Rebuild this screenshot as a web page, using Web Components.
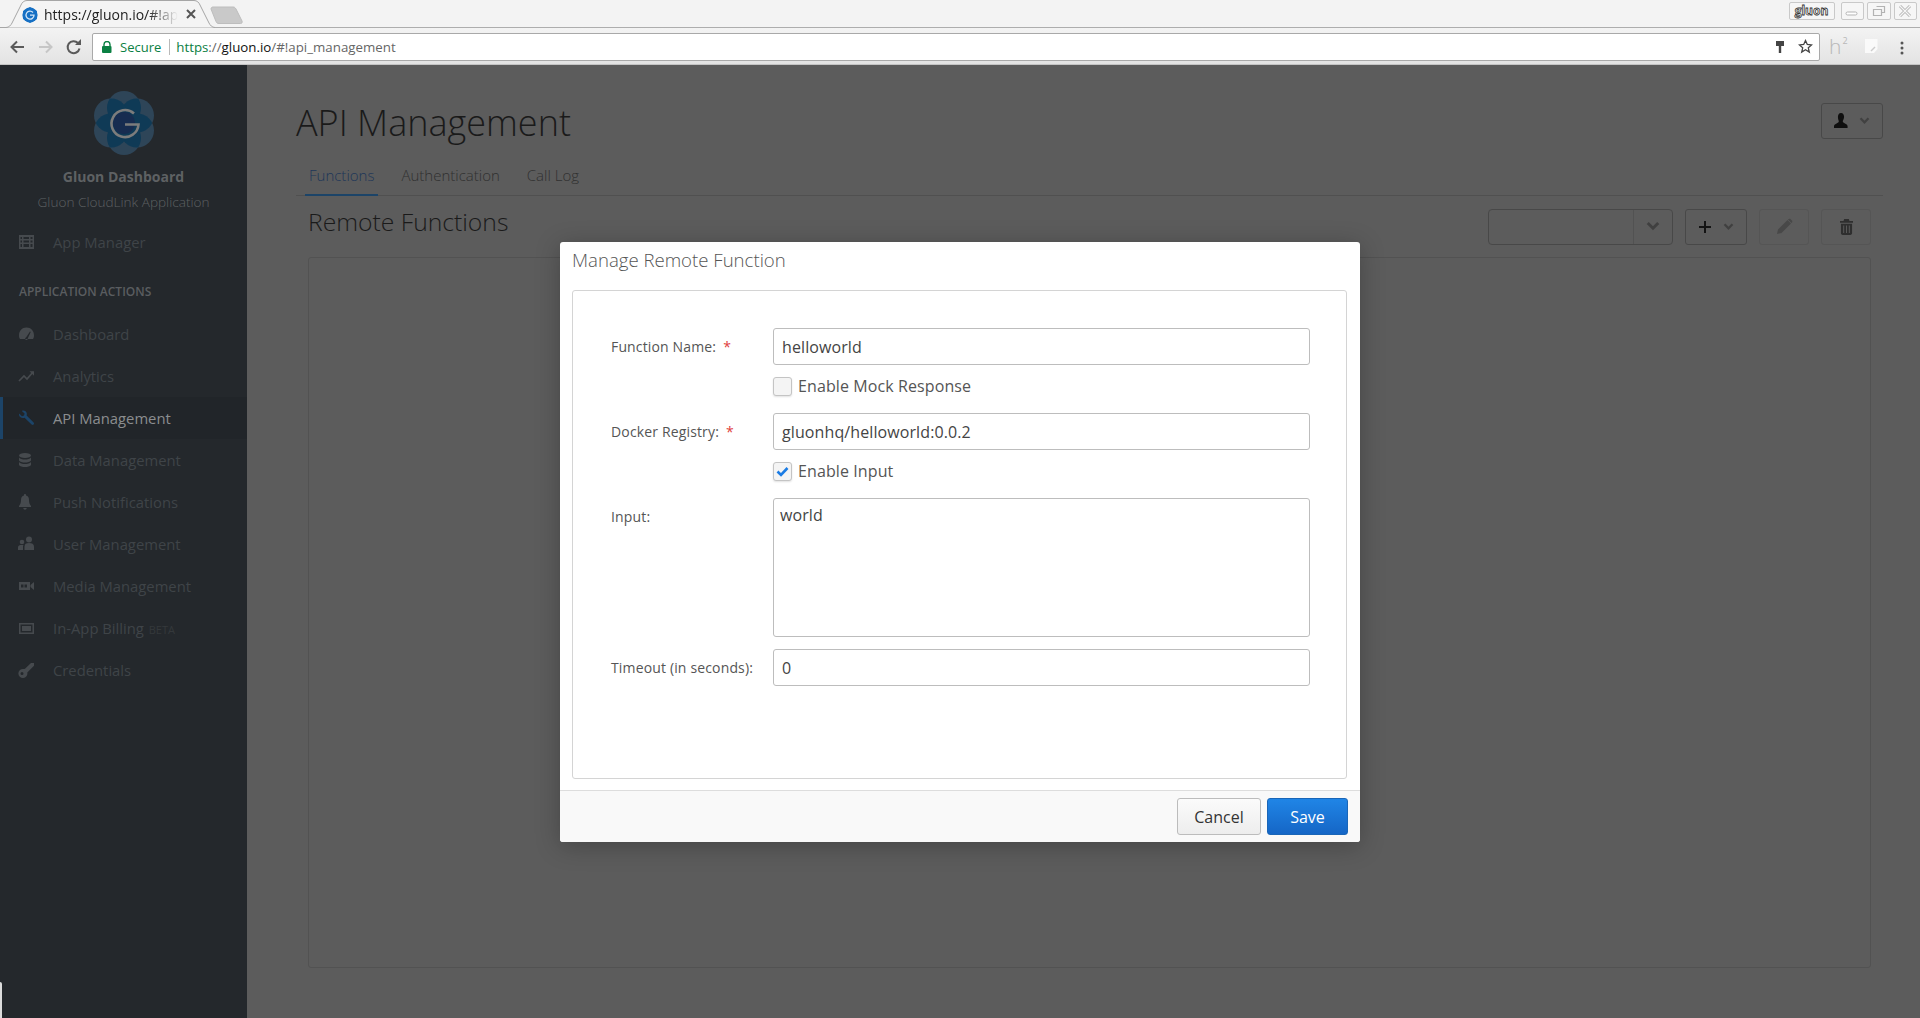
<!DOCTYPE html>
<html><head><meta charset="utf-8">
<style>
html,body{margin:0;height:100%;overflow:hidden;background:#5c5c5c;font-family:"Open Sans","Noto Sans",sans-serif}
body{display:flex;flex-direction:column;height:1018px;position:relative}
</style></head><body>
<browser-frame></browser-frame>
<app-shell>
  <side-nav slot="nav">
    <nav-item icon="table">App Manager</nav-item>
    <nav-heading>APPLICATION ACTIONS</nav-heading>
    <nav-item icon="gauge">Dashboard</nav-item>
    <nav-item icon="chart">Analytics</nav-item>
    <nav-item icon="wrench" active>API Management</nav-item>
    <nav-item icon="db">Data Management</nav-item>
    <nav-item icon="bell">Push Notifications</nav-item>
    <nav-item icon="users">User Management</nav-item>
    <nav-item icon="video">Media Management</nav-item>
    <nav-item icon="money">In-App Billing <small style="font-size:11px;color:#34383b;margin-left:1px">BETA</small></nav-item>
    <nav-item icon="key">Credentials</nav-item>
  </side-nav>
  <page-main slot="main"></page-main>
  <modal-dialog slot="modal"></modal-dialog>
</app-shell>
<script>
const ICONS={
 table:'<path fill-rule="evenodd" d="M1 1h15v14H1zM2.500 3v2h12V3zM2.500 6.500v2h12v-2zM2.500 10v3h12v-3z"/><rect x="4" y="2.500" width="1.500" height="11"/><rect x="11" y="2.500" width="1.500" height="11"/>',
 gauge:'<path fill-rule="evenodd" d="M8.500 1.500C4 1.500 1 5 1 9.500c0 1.500.4 2.700 1 3.500h13c.6-.8 1-2 1-3.500 0-4.500-3-8-7.500-8zM8 11.500l4-6 .7.400-3 6.500a1.300 1.300 0 1 1-1.700-.9z"/>',
 chart:'<path fill="none" stroke="currentColor" stroke-width="1.700" d="M1 13l5-5 3 3 6-7"/><path d="M11.500 3.200H16v4.500z"/>',
 wrench:'<path d="M1 3.500l3 2.700 2-.6.600-2L3.800.9C6 0 8.500 1.200 8.800 3.600c.1.700 0 1.300-.2 1.900l7 7c.6.600.6 1.500 0 2.100-.6.500-1.400.5-2 0l-7-6.900c-.6.200-1.300.3-2 .2C2 7.600.500 5.800 1 3.500z"/>',
 db:'<ellipse cx="7" cy="3.500" rx="6" ry="2.500"/><path d="M1 5.500c1 1.500 3.500 2 6 2s5-.5 6-2v3c-1 1.500-3.500 2-6 2s-5-.5-6-2zM1 10c1 1.500 3.500 2 6 2s5-.5 6-2v3c-1 1.500-3.500 2-6 2s-5-.5-6-2z"/>',
 bell:'<path d="M7 0c.6 0 1 .4 1 1v.6c2 .5 3 2 3 4.400 0 3 .7 4.500 2 6v1H1v-1c1.300-1.500 2-3 2-6 0-2.400 1-3.900 3-4.400V1c0-.6.400-1 1-1zM5.300 14h3.400c0 1-.7 1.700-1.700 1.700S5.300 15 5.300 14z"/>',
 users:'<circle cx="11" cy="3.500" r="3"/><path d="M6.500 14v-3.500C6.500 8 8 7 11 7s5 1 5 3.500V14z"/><circle cx="4" cy="6" r="2.300"/><path d="M0 14v-2.500C0 9.500 1.500 9 4 9c.6 0 1 0 1.500.1-.3.500-.5 1-.5 1.500V14z"/>',
 video:'<path fill-rule="evenodd" d="M1 4h11v8H1zM3 6.500v3h2.500v-3zM6.500 6.500v3H9v-3z"/><path d="M12.500 7L16 4v8l-3.500-3z"/>',
 money:'<path fill-rule="evenodd" d="M1 3h15v11H1zM2.500 4.500v8h12v-8zM4 6h9v5H4z"/><path d="M4 6h1.800L4 10.500zM13 6h-1.800l1.800 4.500z"/>',
 key:'<path fill-rule="evenodd" d="M5.500 7a4.500 4.500 0 1 0 3.800 3.600L16 3.800V1h-3L7 6.800c-.5.100-1 .2-1.500.2zM4 10a1.500 1.500 0 1 1 0 3 1.500 1.500 0 0 1 0-3z"/>'
};
function def(name,html,setup){
  customElements.define(name,class extends HTMLElement{
    constructor(){super();this.attachShadow({mode:'open'}).innerHTML=typeof html==='function'?html(this):html;}
    connectedCallback(){if(setup)setup.call(this)}
  });
}
def('browser-frame',`<style>
:host{display:block;flex:none;height:65px;color:#333;font-family:"Open Sans","Noto Sans",sans-serif}
.strip{height:28px;background:#f3f3f3;position:relative;display:flex;align-items:flex-start;justify-content:flex-end;gap:3px;padding:2px 3px 0 0;box-sizing:border-box;border-bottom:1px solid #adadad}
.tabshape{position:absolute;left:0;top:0}
.title{position:absolute;left:44px;top:4px;height:22px;line-height:22px;font-size:14px;color:#222;white-space:nowrap;-webkit-mask-image:linear-gradient(90deg,#000 78%,transparent);mask-image:linear-gradient(90deg,#000 78%,transparent)}
.x{position:absolute;left:184px;top:7px}
.newtab{position:absolute;left:208px;top:6px}
.fav{position:absolute;left:22px;top:7px}
.badge{width:46px;height:18px;box-sizing:border-box;border:1px solid #c9c9c9;border-radius:2px;font-size:12px;font-weight:700;line-height:15px;text-align:center;color:#fff;-webkit-text-stroke:.8px #333;margin-right:3px;background:#f6f6f6}
.ctl{width:23.500px;height:18px;box-sizing:border-box;border:1px solid #c9c9c9;border-radius:2px;background:#f6f6f6;display:flex;align-items:center;justify-content:center}
.tool{height:37px;background:linear-gradient(#f3f3f3,#e3e3e3);display:flex;align-items:center;box-sizing:border-box;border-bottom:1px solid #c4c4c4;padding-top:1px}
.nav{width:92px;flex:none;display:flex;align-items:center;padding-left:9px;box-sizing:border-box;gap:13px}
.omni{flex:none;width:1728px;height:28px;background:#fff;border:1px solid #a9a9a9;border-radius:2px;box-sizing:border-box;display:flex;align-items:center;font-size:13.300px;white-space:nowrap}
.lock{margin-left:9px}
.sec{color:#0b8043;margin-left:8px;font-size:13px}
.sep{width:1px;height:16px;background:#b9b9b9;margin:0 6px 0 8px}
.url{color:#666;flex:1}.url b{font-weight:400;color:#111}.url i{font-style:normal;color:#0b8043}
.end{display:flex;gap:13px;align-items:center;padding-right:6px}
.ext{flex:1;display:flex;align-items:center;position:relative;height:28px}
.h2{position:absolute;left:9px;top:-1px;font:300 21px "Open Sans",sans-serif;color:#b8b8b8}
.h2 sup{font-size:9px;vertical-align:10px;margin-left:1px;font-weight:400}
.note{position:absolute;left:45px;top:6px}.dots{position:absolute;left:80px;top:8px}
</style>
<div class="strip">
<svg class="tabshape" width="216" height="28"><path d="M0 27.500h6C9 27.500 11 25 12 23L21 5c1-2.500 3-4.500 6-4.500h167c3 0 5 2 6 4.500l9 18c1 2 3 4.500 6 4.500" fill="#f4f4f4" stroke="#a6a6a6"/></svg>
<svg class="fav" width="16" height="16"><path d="M8 0l7 4v8l-7 4-7-4V4z" fill="#1670c4"/><circle cx="8" cy="8" r="7.600" fill="#1670c4"/><path d="M11 5.500A4 4 0 1 0 12 8.200H8" fill="none" stroke="#cfe4f7" stroke-width="1.300"/></svg>
<span class="title">https://gluon.io/#!ap</span>
<svg class="x" width="14" height="14"><path d="M3 3l8 8M11 3l-8 8" stroke="#555" stroke-width="2"/></svg>
<svg class="newtab" width="36" height="20"><path d="M3 3c0-1.500 1-2 2-2h20c1.500 0 2 .5 3 2l6 12c.5 1.500 0 2.500-1.500 2.500H11c-1.500 0-2.500-.5-3-2z" fill="#c9c9c9" stroke="#bdbdbd"/></svg>
<span class="badge">gluon</span>
<span class="ctl"><svg width="14" height="12"><rect x="1" y="7" width="11" height="3" rx="1.500" fill="#fff" stroke="#b3b3b3"/></svg></span>
<span class="ctl"><svg width="14" height="12"><path d="M4.500 1.500h8v6h-3M1.500 4.500h8v6h-8z" fill="none" stroke="#b3b3b3" stroke-width="1.200"/></svg></span>
<span class="ctl"><svg width="14" height="14"><path d="M2 2l10 10M12 2L2 12" stroke="#b3b3b3" stroke-width="3"/><path d="M2 2l10 10M12 2L2 12" stroke="#f6f6f6" stroke-width="1.200"/></svg></span>
</div>
<div class="tool">
<div class="nav">
<svg width="16" height="16"><path d="M15 8H3M8 2.500L2.500 8 8 13.500" fill="none" stroke="#5a5a5a" stroke-width="2"/></svg>
<svg width="16" height="16"><path d="M1 8h12M8 2.500L13.500 8 8 13.500" fill="none" stroke="#c6c6c6" stroke-width="2"/></svg>
<svg width="16" height="16" style="margin-left:-1px"><path d="M13.500 9.500A6 6 0 1 1 12 4" fill="none" stroke="#5a5a5a" stroke-width="2"/><path d="M9 6h6V0z" fill="#5a5a5a"/></svg>
</div>
<div class="omni">
<svg class="lock" width="10" height="12"><path d="M2 5V3.500a3 3 0 0 1 6 0V5" fill="none" stroke="#0b8043" stroke-width="1.400"/><rect y="5" width="9.500" height="7" rx="1" fill="#0b8043"/></svg>
<span class="sec">Secure</span><span class="sep"></span>
<span class="url"><i>https</i>://<b>gluon.io</b>/#!api_management</span>
<span class="end">
<svg width="10" height="14"><path d="M1 1h8v5H6.200v7H3.800V6H1z" fill="#444"/></svg>
<svg width="15" height="15"><path d="M7.500 1.500l1.800 4 4.300.4-3.300 2.900 1 4.300-3.800-2.300-3.800 2.300 1-4.300L1.400 5.900l4.300-.4z" fill="#fff" stroke="#444" stroke-width="1.300"/></svg>
</span>
</div>
<div class="ext"><span class="h2">h<sup>2</sup></span>
<svg class="note" width="13" height="15"><path d="M0 0h12.500v10L9 14H0z" fill="#fafafa"/><path d="M6 12l4-4" stroke="#ccc" stroke-width="1.500"/></svg>
<svg class="dots" width="5" height="14"><circle cx="2" cy="2" r="1.500" fill="#555"/><circle cx="2" cy="7" r="1.500" fill="#555"/><circle cx="2" cy="12" r="1.500" fill="#555"/></svg>
</div>
</div>`);
def('app-shell',`<style>
:host{display:flex;flex:1;min-height:0;position:relative;background:#5c5c5c}
.main{flex:1;min-width:0;display:block}
.modal{position:absolute;inset:0;display:flex;align-items:center;justify-content:center}
.sliver{position:absolute;left:0;bottom:0;width:2px;height:36px;background:#dcdcdc;border-top-right-radius:2px}
</style>
<slot name="nav"></slot><div class="main"><slot name="main"></slot></div>
<div class="sliver"></div>
<div class="modal"><slot name="modal"></slot></div>`);
const LOGO=(()=>{
  const r=17,R=15,pts=[90,30,-30,-90,-150,150].map(a=>[+(R*Math.cos(a*Math.PI/180)).toFixed(2),+(-R*Math.sin(a*Math.PI/180)).toFixed(2)]);
  let s='',clips='',lens='';
  pts.forEach((p,i)=>{
    const q=pts[(i+1)%6];
    s+=`<circle cx="${p[0]}" cy="${p[1]}" r="${r}"/>`;
    clips+=`<clipPath id="lc${i}"><circle cx="${p[0]}" cy="${p[1]}" r="${r}"/></clipPath>`;
    lens+=`<circle cx="${q[0]}" cy="${q[1]}" r="${r}" clip-path="url(#lc${i})"/>`;
  });
  return `<svg width="66" height="66" viewBox="-33 -33 66 66"><defs>${clips}</defs><g fill="#2e4558">${s}</g><g fill="#0f3a56">${lens}</g><circle r="11" fill="#172c50"/><path d="M10 -9.500A13.500 13.500 0 1 0 14.500 1.500H1" fill="none" stroke="#7c7c7c" stroke-width="2.600"/></svg>`;
})();
def('side-nav',`<style>
:host{display:block;flex:none;width:247px;background:#24282c;box-sizing:border-box;color:#3f4448}
.brand{display:flex;flex-direction:column;align-items:center;padding-top:25px}
.name{font-size:14px;font-weight:700;color:#5e6163;line-height:20px;margin-top:11px}
.sub{font-size:13.600px;font-weight:300;color:#5d6062;line-height:20px;margin-top:5px}
.list{margin-top:9px}
</style>
<div class="brand">${LOGO}
<div class="name">Gluon Dashboard</div>
<div class="sub">Gluon CloudLink Application</div>
</div>
<div class="list"><slot></slot></div>`);
def('nav-heading',`<style>:host{display:block;height:32px;line-height:32px;padding:13px 0 5px 19px;font-size:12px;font-weight:600;color:#5a5d60}</style><slot></slot>`);
def('nav-item',h=>{const a=h.hasAttribute('active');const ic=ICONS[h.getAttribute('icon')]||'';return `<style>
:host{display:flex;align-items:center;height:42px;position:relative;font-size:14.800px;color:${a?'#8b8d8f':'#3f4448'};${a?'background:#212529;':''}}
.stripe{position:absolute;left:0;top:0;bottom:0;width:3px;background:${a?'#1c4468':'transparent'}}
svg{position:absolute;left:18px;top:13px;color:${a?'#1c4468':'#464a4e'};fill:currentColor}
.t{margin-left:53px;white-space:nowrap}
</style><span class="stripe"></span><svg width="17" height="16" viewBox="0 0 17 16">${ic}</svg><span class="t"><slot></slot></span>`});
def('tool-btn',h=>{const f=h.hasAttribute('faint');return `<style>
:host{display:inline-flex;align-items:center;justify-content:center;gap:11px;height:36px;box-sizing:border-box;border:1px solid ${f?'#555':'#484848'};border-radius:3px;color:#1e1e1e}
</style><slot></slot>`});
const CHEV=(c,w=9)=>`<svg width="${w+3}" height="${w}" viewBox="0 0 12 9"><path d="M1.500 1.500L6 6l4.500-4.500" fill="none" stroke="${c}" stroke-width="2.500"/></svg>`;
def('page-main',`<style>
:host{display:block;height:100%;box-sizing:border-box;padding:0 37px 0 49px;color:#1f1f1f;font-family:"Open Sans",sans-serif}
header{display:flex;justify-content:space-between;align-items:flex-start;height:94px}
h1{margin:0;font-weight:300;font-size:36px;line-height:52px;padding-top:32px;color:#1a1a1a;white-space:nowrap}
.user{margin-top:38px;width:62px}
.tabs{display:flex;height:36px;border-bottom:1px solid #505050;margin-top:0;padding-left:9px;gap:19px;box-sizing:content-box}
.tab{padding:0 4px;height:36px;line-height:32px;font-size:15px;font-weight:300;color:#303030;box-sizing:border-box;white-space:nowrap}
.tab.on{color:#1c3658;border-bottom:2px solid #1c4468;height:37px}
.body{padding:0 12px}
.row{display:flex;align-items:center;height:61px;margin-top:0}
h2{flex:1;margin:0;font-size:24.700px;font-weight:300;color:#1a1a1a;line-height:56px;white-space:nowrap;margin-top:-9px}
.acts{display:flex;gap:12px;align-items:center;padding-top:0}
.sel{width:185px;height:36px;box-sizing:border-box;border:1px solid #484848;border-radius:4px;display:flex;justify-content:flex-end}
.sel span{width:38px;border-left:1px solid #525252;display:flex;align-items:center;justify-content:center}
.panel{height:711px;border:1px solid #525252;border-radius:3px;box-sizing:border-box}
</style>
<header><h1>API Management</h1>
<tool-btn class="user"><svg width="14" height="16" viewBox="0 0 16 17" preserveAspectRatio="none"><path fill="#0f0f0f" d="M8 0c2.500 0 3.500 2 3.500 4 0 2-1 3.500-1.500 4.500 0 1.500 1 2 3 2.800 1.500.6 2.500 1.200 2.500 2.700v2H0v-2c0-1.500 1-2.100 2.500-2.700 2-.8 3-1.300 3-2.800C5 7.500 4.500 6 4.500 4 4.500 2 5.500 0 8 0z"/></svg>${CHEV('#414141',8)}</tool-btn></header>
<div class="tabs"><span class="tab on">Functions</span><span class="tab">Authentication</span><span class="tab">Call Log</span></div>
<div class="body">
<div class="row"><h2>Remote Functions</h2>
<div class="acts">
<div class="sel"><span>${CHEV('#404040',11)}</span></div>
<tool-btn style="width:62px"><svg width="14" height="14"><path d="M7 1v12M1 7h12" stroke="#141414" stroke-width="2"/></svg>${CHEV('#404040',8)}</tool-btn>
<tool-btn faint style="width:50px"><svg width="17" height="17" viewBox="0 0 17 17"><path fill="#484848" d="M1 16l1-4.500L11.500 2l3.500 3.500L5.500 15zM12.300 1.200c.7-.7 1.500-.7 2.100-.1l1.500 1.500c.6.600.6 1.400 0 2l-.4.400-3.600-3.500z"/></svg></tool-btn>
<tool-btn faint style="width:50px"><svg width="13" height="16" viewBox="0 0 14 17"><path fill="#2e2e2e" fill-rule="evenodd" d="M4.500 0h5l.7 2H14v2H0V2h3.800zM1 5h12v10c0 1-.6 2-2 2H3c-1.400 0-2-1-2-2zM3.500 7v8h1V7zM6.500 7v8h1V7zM9.500 7v8h1V7z"/></svg></tool-btn>
</div></div>
<div class="panel"></div>
</div>`);
def('form-row',h=>`<style>
:host{display:grid;grid-template-columns:162px 537px;align-items:start;color:#555;font-size:14px}
.l{line-height:37px;white-space:nowrap;letter-spacing:.15px}
.s{color:#e0403c;margin-left:7px}
</style><div class="l">${h.getAttribute('label')||''}${h.hasAttribute('req')?'<span class="s">*</span>':''}</div><div><slot></slot></div>`);
def('text-box',h=>{const ta=h.hasAttribute('area');return `<style>
:host{display:block;box-sizing:border-box;height:${ta?'139px':'37px'};border:1px solid #bdbdbd;border-radius:3px;background:#fff;color:#444;font-size:16px;letter-spacing:.1px;line-height:${ta?'33px':'36px'};padding:${ta?'0 6px':'0 8px'};white-space:nowrap}
</style><slot></slot>`});
def('check-box',h=>{const c=h.hasAttribute('checked');return `<style>
:host{display:flex;align-items:center;height:19px;gap:6px;color:#555;font-size:16px;letter-spacing:.1px;white-space:nowrap}
.b{width:19px;height:19px;box-sizing:border-box;border:1px solid #c4c4c4;border-radius:3px;background:#f4f4f4;box-shadow:0 1px 2px rgba(0,0,0,.12);display:flex;align-items:center;justify-content:center}
</style><span class="b">${c?'<svg width="13" height="11"><path d="M1.500 5.500L5 9l6.500-7" fill="none" stroke="#1b7ce4" stroke-width="2.600"/></svg>':''}</span><span><slot></slot></span>`});
def('action-btn',h=>{const p=h.hasAttribute('primary');return `<style>
:host{display:inline-flex;align-items:center;justify-content:center;box-sizing:border-box;height:37px;padding-top:1px;border-radius:3px;font-size:16px;
${p?'color:#fff;background:linear-gradient(#2085e6,#1566c6);border:1px solid #1a66b8;width:81px;':'color:#333;background:linear-gradient(#fbfbfb,#ededed);border:1px solid #bcbcbc;width:84px;'}}
</style><slot></slot>`});
def('modal-dialog',`<style>
:host{display:flex;flex-direction:column;width:800px;height:600px;background:#fff;border-radius:3px;box-shadow:0 4px 24px rgba(0,0,0,.25);box-sizing:border-box}
h3{margin:0;height:48px;box-sizing:border-box;padding:0 12px;font-size:18.600px;font-weight:300;color:#555;line-height:36px;white-space:nowrap}
.panel{margin:0 13px 0 12px;height:489px;box-sizing:border-box;border:1px solid #d4d4d4;border-radius:3px;padding:37px 37px 0 38px}
.foot{margin-top:11px;flex:1;border-top:1px solid #ddd;background:#f9f9f9;display:flex;justify-content:flex-end;align-items:center;gap:6px;padding:0 12px 0 0;border-radius:0 0 3px 3px}
</style>
<h3>Manage Remote Function</h3>
<div class="panel">
<form-row label="Function Name:" req><text-box>helloworld</text-box><div style="height:12px"></div><check-box>Enable Mock Response</check-box></form-row>
<div style="height:17px"></div>
<form-row label="Docker Registry:" req><text-box>gluonhq/helloworld:0.0.2</text-box><div style="height:12px"></div><check-box checked>Enable Input</check-box></form-row>
<div style="height:17px"></div>
<form-row label="Input:"><text-box area>world</text-box></form-row>
<div style="height:12px"></div>
<form-row label="Timeout (in seconds):"><text-box>0</text-box></form-row>
</div>
<div class="foot"><action-btn>Cancel</action-btn><action-btn primary>Save</action-btn></div>`);
</script>
</body></html>
